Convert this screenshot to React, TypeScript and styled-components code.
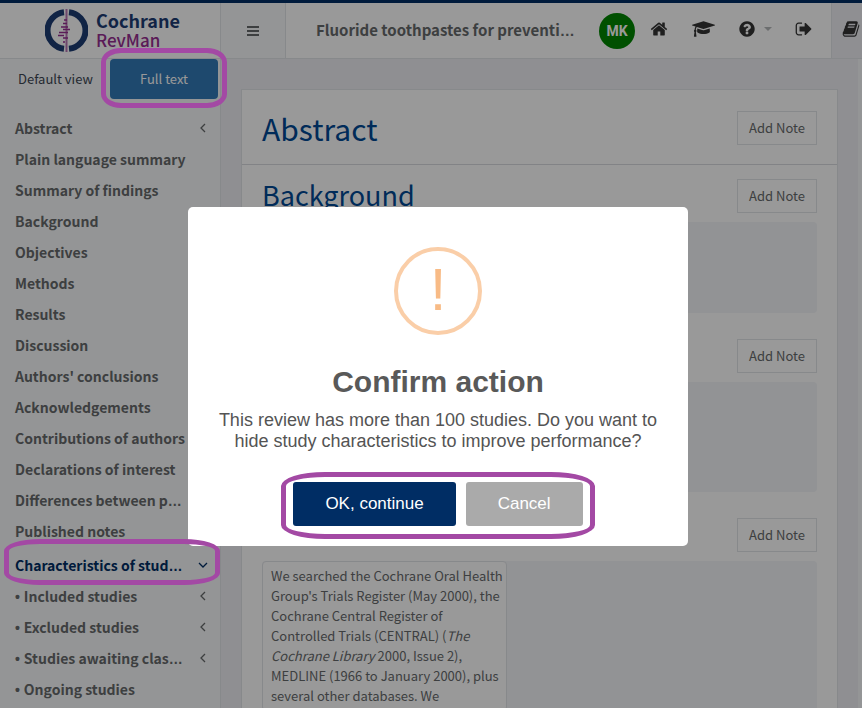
import React from "react";
import styled, { createGlobalStyle } from "styled-components";

const sans = `"Source Sans Pro", "Noto Sans CJK SC", "Noto Sans", sans-serif`;
const arial = `"Liberation Sans", Arial, sans-serif`;

const GlobalStyle = createGlobalStyle`
  *, *::before, *::after { box-sizing: border-box; }
  body {
    margin: 0;
    overflow: hidden;
    background: #eeeff4;
    color: #676a6c;
    font-family: ${sans};
    font-size: 13px;
    line-height: 20px;
  }
  button { font-family: inherit; cursor: pointer; }
  h1, h2, h3, p, ul { margin: 0; padding: 0; }
`;

const Page = styled.div`
  display: flex;
  flex-direction: column;
  height: 100vh;
  border-top: 3px solid #002d64;
`;

const Header = styled.header`
  display: flex;
  flex: none;
  height: 56px;
  border-bottom: 1px solid #e2e4e8;
  background: #fff;
`;

const Brand = styled.a`
  display: flex;
  flex: none;
  align-items: center;
  gap: 8px;
  width: 221px;
  padding-left: 45px;
  border-right: 1px solid #e2e4e8;
  text-decoration: none;
`;

const BrandName = styled.span`
  display: flex;
  flex-direction: column;
  padding-bottom: 1px;
  color: #1d3c74;
  font-size: 18px;
  font-weight: 700;
  line-height: 20px;
`;

const BrandProduct = styled.span`
  color: #962d91;
  font-size: 17px;
  font-weight: 500;
`;

const MenuToggle = styled.button`
  display: grid;
  flex: none;
  place-items: center;
  width: 65px;
  border: 0;
  border-right: 1px solid #e2e4e8;
  background: #f7f8fa;
  color: #676a6c;
`;

const ReviewTitle = styled.h3`
  flex: 1;
  min-width: 0;
  padding-left: 30px;
  overflow: hidden;
  font-size: 15px;
  font-weight: 700;
  line-height: 54px;
  white-space: nowrap;
`;

const Mark = styled.span`
  font-family: ${arial};
  line-height: 1;
`;

const Tools = styled.nav`
  display: flex;
  flex: none;
  align-items: center;
  width: 257px;
  padding-left: 24px;
  border-right: 1px solid #e2e4e8;
`;

const Avatar = styled.button`
  width: 36px;
  height: 36px;
  margin-right: 15px;
  padding: 0;
  border: 0;
  border-radius: 50%;
  background: #008500;
  color: #fff;
  font: 700 14px/36px Roboto, sans-serif;
`;

const Tool = styled.button<{ $gap?: number }>`
  display: flex;
  align-items: center;
  gap: 8px;
  margin: 0 ${(p) => p.$gap ?? 0}px 4px 0;
  padding: 0;
  border: 0;
  background: none;
  color: #353535;
`;

const NotesToggle = styled.button`
  display: flex;
  flex: none;
  align-items: center;
  width: 30px;
  padding: 0 0 4px 10px;
  overflow: hidden;
  border: 0;
  background: #eeeff4;
  color: #353535;
`;

const Body = styled.div`
  display: flex;
  flex: 1;
  min-height: 0;
`;

const Sidebar = styled.aside`
  flex: none;
  width: 221px;
  border-right: 1px solid #e2e4e8;
  background: #f7f9fa;
`;

const Views = styled.div`
  display: flex;
  justify-content: space-between;
  padding: 0 2px 0 18px;
`;

const ViewButton = styled.button<{ $active?: boolean }>`
  width: ${(p) => (p.$active ? "108px" : "auto")};
  height: 40px;
  padding: 0 0 2px;
  border: 0;
  border-radius: 4px;
  background: ${(p) => (p.$active ? "#337ab7" : "none")};
  color: ${(p) => (p.$active ? "#fff" : "#3c4654")};
  font-size: 13px;
`;

const Marked = styled.div`
  position: relative;
`;

const Ring = styled.span<{ $inset: string; $radius: string }>`
  position: absolute;
  inset: ${(p) => p.$inset};
  z-index: 20;
  border: 5px solid #a349a4;
  border-radius: ${(p) => p.$radius};
  pointer-events: none;
`;

const Contents = styled.ul`
  padding-top: 13px;
  list-style: none;
`;

const Entry = styled.li<{ $open?: boolean }>`
  position: relative;
  margin-top: ${(p) => (p.$open ? 3 : 0)}px;
`;

const EntryLink = styled.a<{ $open?: boolean }>`
  display: flex;
  align-items: center;
  justify-content: space-between;
  height: 31px;
  padding: 0 12px 0 15px;
  color: ${(p) => (p.$open ? "#002d64" : "#676a6c")};
  font-size: 14px;
  font-weight: 700;
  text-decoration: none;
  white-space: nowrap;
`;

const Main = styled.main`
  flex: 1;
  min-width: 0;
  padding: 30px 20px 0;
  overflow: hidden;
`;

const Rail = styled.div`
  flex: none;
  width: 4px;
  background: #f7f8fa;
`;

const Card = styled.article`
  border: 1px solid #e2e4e8;
  background: #fff;
`;

const CardHead = styled.div`
  display: flex;
  align-items: center;
  justify-content: space-between;
  height: 75px;
  padding: 2px 20px 0;
  border-bottom: 1px solid #d9dbdf;
`;

const Title = styled.h1`
  color: #004994;
  font-size: 30px;
  font-weight: 400;
  line-height: 34px;
`;

const Subtitle = styled.h2`
  color: #004994;
  font-size: 27px;
  font-weight: 400;
  line-height: 32px;
`;

const Sections = styled.div`
  display: flex;
  flex-direction: column;
  gap: 26px;
  padding: 14px 20px;
`;

const SectionHead = styled.div`
  display: flex;
  justify-content: space-between;
  margin-bottom: 9px;
`;

const NoteButton = styled.button`
  width: 80px;
  height: 34px;
  margin-left: auto;
  padding: 0 0 2px;
  border: 1px solid #e2e4e8;
  background: #fff;
  color: #676a6c;
  font-size: 13px;
`;

const Panel = styled.div<{ $min: number }>`
  min-height: ${(p) => p.$min}px;
  border-radius: 4px;
  background: #f3f5f8;
`;

const Excerpt = styled.p`
  width: 245px;
  padding: 4px 1px 4px 8px;
  border: 1px solid #e2e4e8;
  border-radius: 4px;
  background: #fff;
`;

const Scrim = styled.div`
  position: fixed;
  inset: 0;
  z-index: 10;
  display: flex;
  align-items: flex-start;
  justify-content: center;
  padding: 207px 0 0 14px;
  background: rgba(0, 0, 0, 0.4);
`;

const Dialog = styled.section`
  display: flex;
  flex-direction: column;
  align-items: center;
  width: 500px;
  padding: 40px 20px 20px;
  border-radius: 5px;
  background: #fff;
  color: #545454;
  font-family: ${arial};
  text-align: center;
`;

const Warning = styled.div`
  width: 88px;
  height: 88px;
  border: 4px solid #facea8;
  border-radius: 50%;
  color: #f8bb86;
  font-size: 60px;
  line-height: 78px;
`;

const DialogTitle = styled.h2`
  margin-top: 30px;
  color: #595959;
  font-size: 30px;
  font-weight: 700;
  line-height: 34px;
`;

const DialogText = styled.p`
  margin-top: 11px;
  font-size: 18px;
  line-height: 21px;
`;

const Actions = styled.div`
  position: relative;
  display: flex;
  gap: 10px;
  margin-top: 30px;
`;

const Action = styled.button<{ $primary?: boolean }>`
  height: 44px;
  padding: 0 32px;
  border: 0;
  border-radius: 3px;
  background: ${(p) => (p.$primary ? "#002d64" : "#aaa")};
  color: #fff;
  font-size: 17px;
`;

const glyphs = {
  home: {
    w: 1792,
    d: "M1472 992v480q0 26-19 45t-45 19h-384v-384h-256v384h-384q-26 0-45-19t-19-45v-480q0-1 .5-3t.5-3l575-474 575 474q1 2 1 6zm223-69l-62 74q-8 9-21 11h-3q-13 0-21-7l-692-577-692 577q-12 8-24 7-13-2-21-11l-62-74q-8-10-7-23.5t11-21.5l719-599q32-26 76-26t76 26l244 204v-195q0-14 9-23t23-9h192q14 0 23 9t9 23v408l219 182q10 8 11 21.5t-7 23.5z",
  },
  cap: {
    w: 2304,
    d: "M1774 836l18 316q4 69-82 128t-235 93.5-323 34.5-323-34.5-235-93.5-82-128l18-316 574 181q22 7 48 7t48-7zm530-324q0 23-22 31l-1120 352q-4 1-10 1t-10-1l-652-206q-43 34-71 111.5t-34 178.5q63 36 63 109 0 69-58 107l58 433q2 14-8 25-9 11-24 11h-192q-15 0-24-11-10-11-8-25l58-433q-58-38-58-107 0-73 65-111 11-207 98-330l-333-104q-22-8-22-31t22-31l1120-352q4-1 10-1t10 1l1120 352q22 8 22 31z",
  },
  help: {
    w: 1792,
    d: "M1024 1376v-192q0-14-9-23t-23-9h-192q-14 0-23 9t-9 23v192q0 14 9 23t23 9h192q14 0 23-9t9-23zm256-672q0-88-55.5-163t-138.5-116-170-41q-243 0-371 213-15 24 8 42l132 100q7 6 19 6 16 0 25-12 53-68 86-92 34-24 86-24 48 0 85.5 26t37.5 59q0 38-20 61t-68 45q-63 28-115.5 86.5t-52.5 125.5v36q0 14 9 23t23 9h192q14 0 23-9t9-23q0-19 21.5-49.5t54.5-49.5q32-18 49-28.5t46-35 44.5-48 28-60.5 12.5-81zm384 192q0 209-103 385.5t-279.5 279.5-385.5 103-385.5-103-279.5-279.5-103-385.5 103-385.5 279.5-279.5 385.5-103 385.5 103 279.5 279.5 103 385.5z",
  },
  signOut: {
    w: 1792,
    d: "M704 1440q0 4 1 20t.5 26.5-3 23.5-10 19.5-20.5 6.5h-320q-119 0-203.5-84.5t-84.5-203.5v-704q0-119 84.5-203.5t203.5-84.5h320q13 0 22.5 9.5t9.5 22.5q0 4 1 20t.5 26.5-3 23.5-10 19.5-20.5 6.5h-320q-66 0-113 47t-47 113v704q0 66 47 113t113 47h312l11.5 1 11.5 3 8 5.5 7 9 2 13.5zm928-544q0 26-19 45l-544 544q-19 19-45 19t-45-19-19-45v-288h-448q-26 0-45-19t-19-45v-384q0-26 19-45t45-19h448v-288q0-26 19-45t45-19 45 19l544 544q19 19 19 45z",
  },
  book: {
    w: 1792,
    d: "M1703 478q40 57 18 129l-275 906q-19 64-76.5 107.5t-122.5 43.5h-923q-77 0-148.5-53.5t-99.5-131.5q-24-67-2-127 0-4 3-27t4-37q1-8-3-21.5t-3-19.5q2-11 8-21t16.5-23.5 16.5-23.5q23-38 45-91.5t30-91.5q3-10 .5-30t-.5-28q3-11 17-28t17-23q21-36 42-92t25-90q1-9-2.5-32t.5-28q4-13 22-30.5t22-22.5q19-26 42.5-84.5t27.5-96.5q1-8-3-25.5t-2-26.5q2-8 9-18t18-23 17-21q8-12 16.5-30.5t15-35 16-36 19.5-32 26.5-23.5 36-11.5 47.5 5.5l-1 3q38-9 51-9h761q74 0 114 56t18 130l-274 906q-36 119-71.5 153.5t-128.5 34.5h-869q-27 0-38 15-11 16-1 43 24 70 144 70h923q29 0 56-15.5t35-41.5l300-987q7-22 5-57 38 15 59 43zm-1064 2q-4 13 2 22.5t20 9.5h608q13 0 25.5-9.5t16.5-22.5l21-64q4-13-2-22.5t-20-9.5h-608q-13 0-25.5 9.5t-16.5 22.5zm-83 256q-4 13 2 22.5t20 9.5h608q13 0 25.5-9.5t16.5-22.5l21-64q4-13-2-22.5t-20-9.5h-608q-13 0-25.5 9.5t-16.5 22.5z",
  },
};

function Glyph({ name }: { name: keyof typeof glyphs }) {
  const { w, d } = glyphs[name];
  return (
    <svg
      width={w === 1792 ? 18 : 23}
      height="18"
      viewBox={`0 0 ${w} 1792`}
      fill="currentColor"
      aria-hidden="true"
    >
      <path d={d} />
    </svg>
  );
}

function Logo() {
  return (
    <svg width="43" height="43" viewBox="0 0 43 43" fill="none" aria-hidden="true">
      <path d="M19 3.200A18.400 18.400 0 0 0 19 39.800" stroke="#1d3c74" strokeWidth="6" />
      <path d="M24 3.200A18.400 18.400 0 0 1 24 39.800" stroke="#1d3c74" strokeWidth="6" />
      <path d="M21.500 0V43" stroke="#b877b5" strokeWidth="2" />
      <path
        d="M19 11H22M18 14.500H22M16 18H23M18 20.500H25M14 23.500H23M13 26.500H19M18 29H23M18 33H20"
        stroke="#962d91"
        strokeWidth="1.500"
      />
    </svg>
  );
}

function Chevron({ open }: { open?: boolean }) {
  return (
    <svg
      width="10"
      height="10"
      viewBox="0 0 10 10"
      fill="none"
      stroke="currentColor"
      strokeWidth="1.300"
      aria-hidden="true"
    >
      <path d={open ? "M1 3L5 7L9 3" : "M7 1L3 5L7 9"} />
    </svg>
  );
}

type Item = {
  label: string;
  arrow?: boolean;
  open?: boolean;
  child?: boolean;
  shortened?: boolean;
};

const items: Item[] = [
  { label: "Abstract", arrow: true },
  { label: "Plain language summary" },
  { label: "Summary of findings" },
  { label: "Background" },
  { label: "Objectives" },
  { label: "Methods" },
  { label: "Results" },
  { label: "Discussion" },
  { label: "Authors' conclusions" },
  { label: "Acknowledgements" },
  { label: "Contributions of authors" },
  { label: "Declarations of interest" },
  { label: "Differences between p", shortened: true },
  { label: "Published notes" },
  { label: "Characteristics of stud", shortened: true, arrow: true, open: true },
  { label: "Included studies", child: true, arrow: true },
  { label: "Excluded studies", child: true, arrow: true },
  { label: "Studies awaiting clas", shortened: true, child: true, arrow: true },
  { label: "Ongoing studies", child: true },
];

export default function App() {
  return (
    <>
      <GlobalStyle />
      <Page>
        <Header>
          <Brand href="#home">
            <Logo />
            <BrandName>
              Cochrane
              <BrandProduct>RevMan</BrandProduct>
            </BrandName>
          </Brand>
          <MenuToggle aria-label="Toggle menu">
            <svg width="12" height="10" viewBox="0 0 12 10" stroke="currentColor" strokeWidth="2">
              <path d="M0 1H12M0 5H12M0 9H12" />
            </svg>
          </MenuToggle>
          <ReviewTitle>
            Fluoride toothpastes for preventi<Mark>…</Mark>
          </ReviewTitle>
          <Tools aria-label="Account">
            <Avatar>MK</Avatar>
            <Tool $gap={24} aria-label="Home"><Glyph name="home" /></Tool>
            <Tool $gap={23} aria-label="Training"><Glyph name="cap" /></Tool>
            <Tool $gap={23} aria-label="Help">
              <Glyph name="help" />
              <svg width="8" height="4" viewBox="0 0 8 4" fill="#b5b7ba" aria-hidden="true">
                <path d="M0 0H8L4 4Z" />
              </svg>
            </Tool>
            <Tool aria-label="Sign out"><Glyph name="signOut" /></Tool>
          </Tools>
          <NotesToggle aria-label="Notes"><Glyph name="book" /></NotesToggle>
        </Header>

        <Body>
          <Sidebar>
            <Views>
              <ViewButton>Default view</ViewButton>
              <Marked>
                <ViewButton $active>Full text</ViewButton>
                <Ring $inset="-11px -9px -9px" $radius="20px / 14px" />
              </Marked>
            </Views>
            <Contents>
              {items.map(({ label, arrow, open, child, shortened }) => (
                <Entry key={label} $open={open}>
                  <EntryLink href="#section" $open={open}>
                    <span>
                      {child && <Mark>• </Mark>}
                      {label}
                      {shortened && <Mark>…</Mark>}
                    </span>
                    {arrow && <Chevron open={open} />}
                  </EntryLink>
                  {open && <Ring $inset="-10px 0 -5px 4px" $radius="36px / 12px" />}
                </Entry>
              ))}
            </Contents>
          </Sidebar>

          <Main>
            <Card>
              <CardHead>
                <Title>Abstract</Title>
                <NoteButton>Add Note</NoteButton>
              </CardHead>
              <Sections>
                <section>
                  <SectionHead>
                    <Subtitle>Background</Subtitle>
                    <NoteButton>Add Note</NoteButton>
                  </SectionHead>
                  <Panel $min={91} />
                </section>
                <section>
                  <SectionHead><NoteButton>Add Note</NoteButton></SectionHead>
                  <Panel $min={110} />
                </section>
                <section>
                  <SectionHead><NoteButton>Add Note</NoteButton></SectionHead>
                  <Panel $min={180}>
                    <Excerpt>
                      We searched the Cochrane Oral Health Group's Trials Register (May 2000), the
                      Cochrane Central Register of Controlled Trials (CENTRAL) (
                      <em>The Cochrane Library</em> 2000, Issue 2), MEDLINE (1966 to January 2000),
                      plus several other databases. We
                    </Excerpt>
                  </Panel>
                </section>
              </Sections>
            </Card>
          </Main>
          <Rail />
        </Body>
      </Page>

      <Scrim>
        <Dialog role="dialog" aria-modal="true" aria-labelledby="dialog-title">
          <Warning aria-hidden="true">!</Warning>
          <DialogTitle id="dialog-title">Confirm action</DialogTitle>
          <DialogText>
            This review has more than 100 studies. Do you want to hide study characteristics to
            improve performance?
          </DialogText>
          <Actions>
            <Action $primary>OK, continue</Action>
            <Action>Cancel</Action>
            <Ring $inset="-10px -12px -13px" $radius="44px / 14px" />
          </Actions>
        </Dialog>
      </Scrim>
    </>
  );
}
